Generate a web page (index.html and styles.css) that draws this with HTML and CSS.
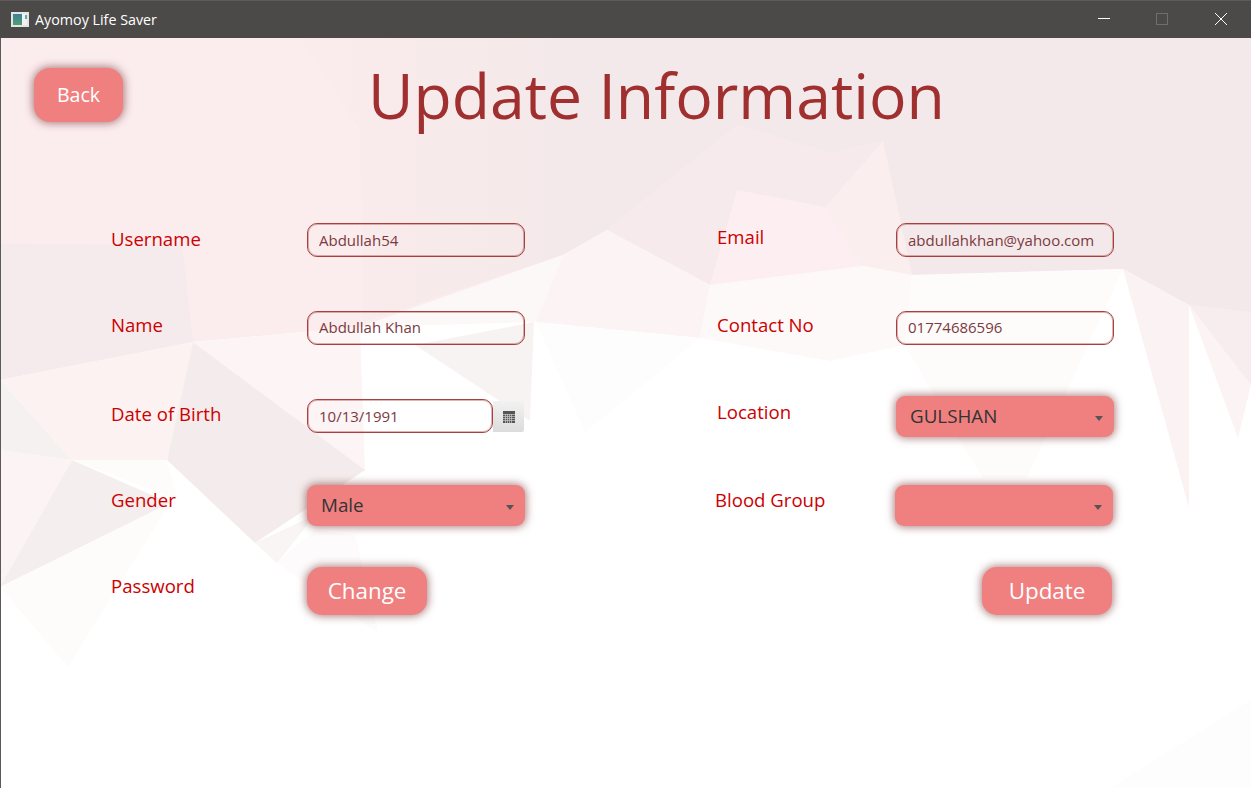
FILE: index.html
```html
<!DOCTYPE html>
<html lang="en">
<head>
  <meta charset="UTF-8">
  <meta name="viewport" content="width=device-width, initial-scale=1.0">
  <title>Ayomoy Life Saver</title>
  <link rel="stylesheet" href="styles.css">
</head>
<body>

  <div class="titlebar">
    <svg class="app-icon" width="18" height="15" viewBox="0 0 18 15">
      <defs>
        <linearGradient id="iconFill" x1="0" y1="0" x2="0" y2="1">
          <stop offset="0" stop-color="#3f7f9a"/>
          <stop offset="1" stop-color="#4fa070"/>
        </linearGradient>
      </defs>
      <rect width="18" height="15" fill="#e4e6e6"/>
      <rect x="2" y="2" width="9" height="11" fill="url(#iconFill)"/>
      <rect x="11" y="2" width="5" height="11" fill="#f2f2f2"/>
      <rect x="14" y="3" width="2" height="4" fill="#4fb0a8"/>
    </svg>
    <span class="app-name">Ayomoy Life Saver</span>
    <div class="window-controls">
      <svg width="58" height="38" viewBox="0 0 58 38"><path d="M23 18.5h12" stroke="#fff" fill="none"/></svg>
      <svg width="58" height="38" viewBox="0 0 58 38"><rect x="23.5" y="13.5" width="11" height="11" stroke="#6f6e6c" fill="none"/></svg>
      <svg width="58" height="38" viewBox="0 0 58 38"><path d="M24 13l12 12M36 13L24 25" stroke="#fff" fill="none"/></svg>
    </div>
  </div>

  <div class="content">
    <!-- low poly backdrop -->
    <svg class="backdrop" width="1250" height="750" viewBox="1 38 1250 750">
      <defs>
        <linearGradient id="topGrey" gradientUnits="userSpaceOnUse" x1="340" y1="0" x2="560" y2="0">
          <stop offset="0" stop-color="#faebec"/>
          <stop offset="1" stop-color="#f4e9ea"/>
        </linearGradient>
      </defs>
      <polygon fill="#fbecee" points="0,38 1251,38 1251,385 1189,305 1123,269 912,275 863,266 710,285 607,230 563,255 360,327 193,342 0,380"/>
      <polygon fill="url(#topGrey)" points="300,38 1251,38 1251,312 1189,305 1123,269 912,275 883,141 830,153 737,125 607,230 563,255 363,322 360,130"/>
      <polygon fill="#f7eaec" points="607,230 737,125 830,153 883,141 863,266 710,285"/>
      <polygon fill="#f5ebec" points="0,244 182,245 193,342 0,380"/>
      <polygon fill="#fdeff1" points="737,190 825,207 863,266 710,285"/>
      <polygon fill="#fbeeef" points="883,141 912,275 863,266 825,207"/>
      <polygon fill="#fcf3f4" points="563,255 607,230 710,285 700,338 536,322"/>
      <polygon fill="#fef9f9" points="710,285 863,266 912,275 905,345 830,361 700,338"/>
      <polygon fill="#fefbfb" points="912,275 1123,269 1067,391 1027,478 983,478 960,441 905,345"/>
      <polygon fill="#fbf2f3" points="1123,269 1189,305 1189,508"/>
      <polygon fill="#f7ecee" points="1189,305 1251,312 1251,385"/>
      <polygon fill="#fcf3f5" points="1189,305 1251,385 1238,438"/>
      <polygon fill="#fdf4f5" points="193,342 360,327 365,470"/>
      <polygon fill="#fbf8f7" points="360,327 563,255 536,322"/>
      <polygon fill="#f7f3f3" points="415,345 534,322 530,421"/>
      <polygon fill="#fefdfd" points="536,322 700,338 585,432"/>
      <polygon fill="#fcf2f2" points="0,380 193,342 167,460 72,460"/>
      <polygon fill="#f4ecec" points="193,342 365,470 255,543 167,460"/>
      <polygon fill="#f6f1f1" points="0,380 72,460 0,450"/>
      <polygon fill="#fbf3f4" points="0,450 72,460 0,587"/>
      <polygon fill="#f5eeee" points="72,460 170,503 0,587"/>
      <polygon fill="#fefbfb" points="72,460 167,460 178,500"/>
      <polygon fill="#fefbfb" points="0,587 170,503 68,667"/>
      <polygon fill="#f8f5f4" points="255,543 315,515 277,563"/>
      <polygon fill="#fdfbfb" points="277,563 315,530 355,535 378,633"/>
      <polygon fill="#fefdfd" points="1110,788 1251,700 1251,788"/>
    </svg>

    <div class="page-head">
      <button class="btn btn-back">Back</button>
      <h1 class="page-title">Update Information</h1>
    </div>

    <div class="info-form">
      <label class="field-label lbl-username">Username</label>
      <input class="text-field" type="text" value="Abdullah54">
      <label class="field-label lbl-email">Email</label>
      <input class="text-field" type="text" value="abdullahkhan@yahoo.com">

      <label class="field-label lbl-name">Name</label>
      <input class="text-field text-field-tight" type="text" value="Abdullah Khan">
      <label class="field-label lbl-name">Contact No</label>
      <input class="text-field text-field-tight" type="text" value="01774686596">

      <label class="field-label lbl-dob">Date of Birth</label>
      <div class="date-field">
        <input class="text-field date-input" type="text" value="10/13/1991">
        <div class="date-btn">
          <svg width="12" height="12" viewBox="0 0 12 12">
            <rect width="12" height="12" fill="#555"/>
            <path d="M0 3.5h12M0 5.5h12M0 7.5h12M0 9.5h12M2.5 3v9M4.5 3v9M6.5 3v9M8.5 3v9" stroke="#ccc" stroke-width=".7" fill="none"/>
          </svg>
        </div>
      </div>
      <label class="field-label lbl-location">Location</label>
      <div class="select-box">
        <span>GULSHAN</span>
        <i class="caret"></i>
      </div>

      <label class="field-label lbl-gender">Gender</label>
      <div class="select-box">
        <span>Male</span>
        <i class="caret"></i>
      </div>
      <label class="field-label lbl-gender lbl-blood">Blood Group</label>
      <div class="select-box select-blood">
        <span></span>
        <i class="caret"></i>
      </div>

      <label class="field-label lbl-password">Password</label>
      <div>
        <button class="btn btn-change">Change</button>
      </div>
      <div></div>
      <div class="update-cell">
        <button class="btn btn-update">Update</button>
      </div>
    </div>
  </div>

</body>
</html>
```

FILE: styles.css
```css
body {
  margin: 0;
  width: 1251px;
  height: 788px;
  overflow: hidden;
  font-family: "Open Sans", sans-serif;
  background-color: #fff;
  display: flex;
  flex-direction: column;
}

.titlebar {
  height: 38px;
  flex: none;
  background-color: #4c4a48;
  border-top: 1px solid #5c5b59;
  box-sizing: border-box;
  display: flex;
  align-items: center;
  padding-left: 11px;
  color: #fff;
}

.app-icon {
  margin-right: 6px;
}

.app-name {
  font-size: 14.3px;
}

.window-controls {
  margin-left: auto;
  margin-right: 2px;
  display: flex;
  margin-top: -1px;
}

.window-controls svg {
  display: block;
}

.content {
  flex: 1;
  position: relative;
  border-left: 1px solid #5a5a5a;
}

.backdrop {
  position: absolute;
  top: 0;
  left: 0;
}

.page-head {
  position: relative;
  display: flex;
  align-items: flex-start;
  padding: 30px 0 0 33px;
  height: 154px;
  box-sizing: border-box;
}

.page-title {
  margin: -16px 0 0 245px;
  font-size: 62.5px;
  font-weight: 400;
  line-height: 86px;
  color: #a03030;
}

.btn {
  border: none;
  background-color: #f08080;
  color: #fff;
  font-family: "Open Sans", sans-serif;
  box-shadow: 0 0 8px 1px rgba(110, 40, 40, 0.6);
  cursor: pointer;
  padding: 0 0 2px;
}

.btn-back {
  width: 89px;
  height: 54px;
  border-radius: 16px;
  font-size: 19.6px;
}

.btn-change,
.btn-update {
  height: 48px;
  border-radius: 15px;
  font-size: 22.4px;
}

.btn-change {
  width: 120px;
}

.btn-update {
  width: 130px;
}

.info-form {
  position: relative;
  margin-left: 110px;
  margin-top: 31px;
  display: grid;
  grid-template-columns: 196px 218px 192px 179px 218px;
  grid-template-rows: 88px 85px 89px 82px 48px;
  align-items: start;
}

/* blank column between the two halves of the form */
.info-form > :nth-child(4n+3) {
  grid-column: 4;
}

.field-label {
  font-size: 18.6px;
  line-height: 24px;
  color: #cc0000;
}

.lbl-username { margin-top: 4px; }
.lbl-email { margin-top: 2px; }
.lbl-name { margin-top: 2px; }
.lbl-dob { margin-top: 6px; }
.lbl-location { margin-top: 4px; }
.lbl-gender { margin-top: 3px; }
.lbl-password { margin-top: 7px; }
.lbl-blood { margin-left: -2px; }

.text-field {
  width: 218px;
  height: 34px;
  box-sizing: border-box;
  border: 1px solid #a84040;
  box-shadow: inset 0 0 0 1px rgba(170, 70, 70, 0.4);
  border-radius: 10px;
  background: transparent;
  padding: 0 11px;
  font-family: "Open Sans", sans-serif;
  font-size: 15px;
  color: #7c3a40;
  outline: none;
}

.text-field-tight {
  padding-bottom: 2px;
}

.date-field {
  display: flex;
  align-items: flex-start;
  margin-top: 3px;
}

.date-input {
  width: 186px;
}

.date-btn {
  width: 31px;
  height: 31px;
  margin-top: 2px;
  background: linear-gradient(#f2f2f2, #dcdcdc);
  border-radius: 0 2px 2px 0;
  display: flex;
  align-items: center;
  justify-content: center;
}

.select-box {
  width: 218px;
  height: 41px;
  box-sizing: border-box;
  padding: 0 11px 2px 14px;
  background-color: #f08080;
  border-radius: 9px;
  box-shadow: 0 0 8px 1px rgba(110, 40, 40, 0.6);
  display: flex;
  align-items: center;
  justify-content: space-between;
  font-size: 18.8px;
  color: #333;
}

.select-blood {
  margin-left: -1px;
}

.caret {
  width: 0;
  height: 0;
  margin-top: 5px;
  border-left: 4.5px solid transparent;
  border-right: 4.5px solid transparent;
  border-top: 5px solid #555;
}

.update-cell {
  display: flex;
  justify-content: flex-end;
  padding-right: 2px;
}
```
